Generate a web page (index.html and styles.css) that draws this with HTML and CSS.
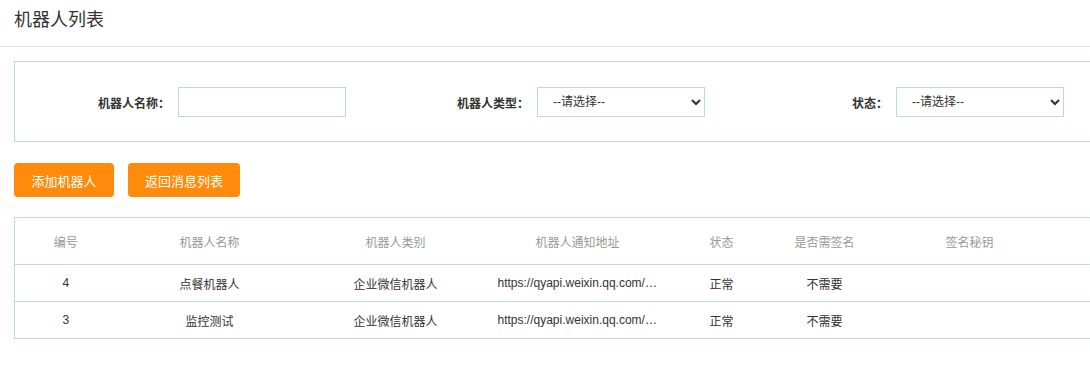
FILE: index.html
```html
<!DOCTYPE html>
<html lang="zh-CN">
<head>
<meta charset="utf-8">
<title>机器人列表</title>
<link rel="stylesheet" href="styles.css">
</head>
<body>
<div class="page">
  <header class="page-head">
    <h1 class="page-title">机器人列表</h1>
  </header>
  <div class="content">
    <form class="filter-box">
      <div class="field field-first">
        <label class="field-label">机器人名称：</label>
        <input class="field-input" type="text">
      </div>
      <div class="field">
        <label class="field-label">机器人类型：</label>
        <select class="field-select"><option>--请选择--</option></select>
      </div>
      <div class="field">
        <label class="field-label">状态：</label>
        <select class="field-select"><option>--请选择--</option></select>
      </div>
    </form>
    <div class="actions">
      <button class="btn btn-add" type="button">添加机器人</button>
      <button class="btn btn-back" type="button">返回消息列表</button>
    </div>
    <table class="data-table">
      <colgroup>
        <col class="c-id"><col class="c-name"><col class="c-type"><col class="c-url"><col class="c-status"><col class="c-sign"><col class="c-secret"><col class="c-op">
      </colgroup>
      <thead>
        <tr><th>编号</th><th>机器人名称</th><th>机器人类别</th><th>机器人通知地址</th><th>状态</th><th>是否需签名</th><th>签名秘钥</th><th>操作</th></tr>
      </thead>
      <tbody>
        <tr><td>4</td><td>点餐机器人</td><td>企业微信机器人</td><td><span class="url">https://qyapi.weixin.qq.com/cgi-bin/webhook/send</span></td><td>正常</td><td>不需要</td><td></td><td></td></tr>
        <tr><td>3</td><td>监控测试</td><td>企业微信机器人</td><td><span class="url">https://qyapi.weixin.qq.com/cgi-bin/webhook/send</span></td><td>正常</td><td>不需要</td><td></td><td></td></tr>
      </tbody>
    </table>
  </div>
</div>
</body>
</html>
```
FILE: styles.css
```css
html, body {
  margin: 0;
  padding: 0;
  background: #fff;
  overflow: hidden;
}
body {
  font-family: "Liberation Sans", "Noto Sans CJK SC", sans-serif;
  font-size: 12px;
  color: #333;
}
.page {
  width: 1330px;
}
.page-head {
  height: 47px;
  border-bottom: 1px solid #e3e3e3;
  box-sizing: border-box;
  padding-left: 14px;
  display: flex;
  align-items: center;
}
.page-title {
  margin: 0;
  font-size: 18px;
  font-weight: normal;
  color: #333;
  line-height: 1;
  position: relative;
  top: -3px;
}
.content {
  padding: 14px 0 0 14px;
}
.filter-box {
  margin: 0;
  border: 1px solid #bcdde0;
  padding: 25px 0 24px 0;
  display: flex;
  gap: 28px;
}
.field {
  display: flex;
  align-items: center;
}
.field-label {
  width: 163px;
  padding-right: 8px;
  box-sizing: border-box;
  text-align: right;
  font-weight: bold;
  font-size: 12px;
  color: #333;
}
.field-input, .field-select {
  width: 168px;
  height: 30px;
  box-sizing: border-box;
  border: 1px solid #b9dbdd;
  background: #fff;
  margin: 0;
  font-family: "Liberation Sans", "Noto Sans CJK SC", sans-serif;
  font-size: 12px;
  color: #333;
  border-radius: 0;
  outline: none;
}
.field-select {
  padding-left: 11px;
}
.actions {
  display: flex;
  gap: 14px;
  margin-top: 21px;
}
.btn {
  height: 34px;
  border: none;
  border-radius: 4px;
  background: #ff8a0b;
  color: #fff;
  font-family: "Liberation Sans", "Noto Sans CJK SC", sans-serif;
  font-size: 13px;
  padding: 0;
  cursor: pointer;
}
.btn-add { width: 100px; }
.btn-back { width: 112px; }
.data-table {
  margin-top: 20px;
  border-collapse: collapse;
  table-layout: fixed;
  width: 1298px;
  border: 1px solid #bcdde0;
}
.c-id { width: 102px; }
.c-name { width: 186px; }
.c-type { width: 186px; }
.c-url { width: 178px; }
.c-status { width: 110px; }
.c-sign { width: 96px; }
.c-secret { width: 240px; }
.c-op { width: 200px; }
.data-table th {
  height: 46px;
  font-weight: normal;
  color: #999;
  font-size: 12px;
  text-align: center;
  padding: 0;
}
.data-table th:nth-child(7) {
  text-align: left;
  padding-left: 73px;
}
.data-table td {
  height: 36px;
  text-align: center;
  padding: 0;
  border-top: 1px solid #bcdde0;
  color: #333;
  font-size: 12px;
}
.url {
  display: inline-block;
  max-width: 160px;
  overflow: hidden;
  text-overflow: ellipsis;
  white-space: nowrap;
  vertical-align: middle;
}
```
